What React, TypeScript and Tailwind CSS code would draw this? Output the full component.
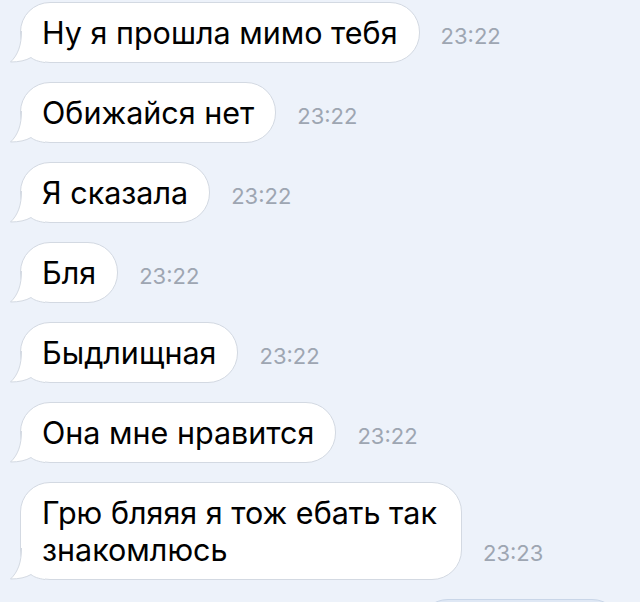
import React from "react";

const messages = [
  { text: "Ну я прошла мимо тебя", time: "23:22" },
  { text: "Обижайся нет", time: "23:22" },
  { text: "Я сказала", time: "23:22" },
  { text: "Бля", time: "23:22" },
  { text: "Быдлищная", time: "23:22" },
  { text: "Она мне нравится", time: "23:22" },
  { text: "Грю бляяя я тож ебать так знакомлюсь", time: "23:23" },
];

const Tail = () => (
  <svg
    className="absolute -left-[12px] -bottom-[1px]"
    width="36"
    height="34"
    viewBox="0 0 36 34"
  >
    <path
      d="M12.5 2 C12.5 16 9 26 1.5 33 C10 33 17 31.5 22 28.5 C25 31 29 32.5 36 33.5 L36 0 Z"
      fill="#ffffff"
    />
    <path
      d="M12.5 2 C12.5 16 9 26 1.5 33 C10 33 17 31.5 22 28.5 C25 31 29 32.5 36 33.5"
      fill="none"
      stroke="#d3d9e2"
      strokeWidth="1"
    />
  </svg>
);

const Bubble = ({ text, time }: { text: string; time: string }) => (
  <div className="flex items-end">
    <div className="relative max-w-[442px] rounded-[30px] border border-[#d3d9e2] bg-white px-[21px] py-[11px] text-[30.5px] leading-[37px] text-black">
      <Tail />
      <span className="relative">{text}</span>
    </div>
    <span className="mb-[16px] ml-[21px] text-[22px] leading-[22px] text-[#9ea6b2]">
      {time}
    </span>
  </div>
);

export default function App() {
  return (
    <div
      className="h-[602px] w-[640px] overflow-hidden bg-[#edf2fa] pl-[20px] pt-[2px]"
      style={{ fontFamily: 'Inter, "Liberation Sans", Arial, sans-serif' }}
    >
      <div className="flex flex-col gap-[19px]">
        {messages.map((m, i) => (
          <Bubble key={i} text={m.text} time={m.time} />
        ))}
        {/* outgoing bubble, only its top edge shows */}
        <div className="ml-auto mr-[18px] h-[61px] w-[204px] rounded-[30px] border border-[#c9d6e8] bg-[#dfe8f5]" />
      </div>
    </div>
  );
}
